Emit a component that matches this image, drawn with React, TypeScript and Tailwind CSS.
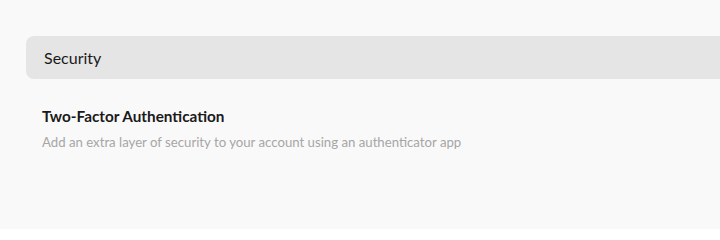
export default function App() {
  return (
    <div className="h-[229px] w-[720px] overflow-hidden bg-[#f9f9f9] pt-9 pl-[26px] font-['Lato',sans-serif]">
      <div className="flex h-[43px] items-center rounded-l-lg bg-[#e5e5e5] pl-[18px]">
        <h2 className="text-[16px] text-[#1a1a1a]">Security</h2>
      </div>
      <div className="pt-[27px] pl-4">
        <h3 className="text-[15.3px] leading-5 font-bold text-[#1a1a1a]">Two-Factor Authentication</h3>
        <p className="mt-[6px] text-[13.2px] leading-5 text-[#a6a6a6]">
          Add an extra layer of security to your account using an authenticator app
        </p>
      </div>
    </div>
  )
}
